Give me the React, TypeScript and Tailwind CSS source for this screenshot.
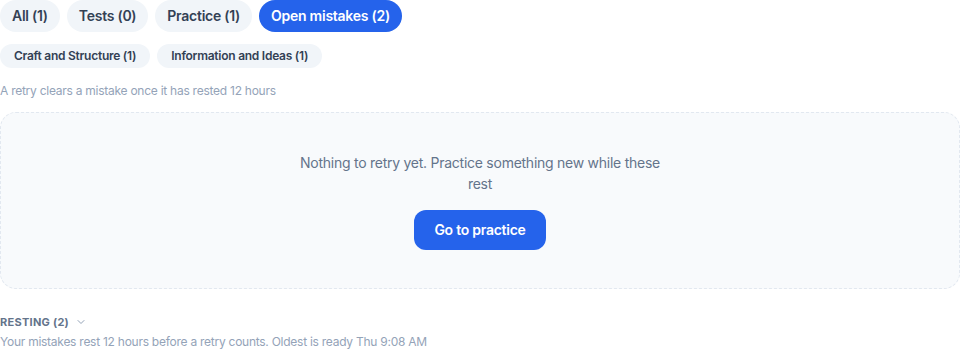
import { ChevronDown } from "lucide-react";

const tabs = [
  { label: "All (1)", active: false },
  { label: "Tests (0)", active: false },
  { label: "Practice (1)", active: false },
  { label: "Open mistakes (2)", active: true },
];

const skills = ["Craft and Structure (1)", "Information and Ideas (1)"];

export default function App() {
  return (
    <div className="bg-white w-[960px] h-[351px] overflow-hidden font-['Inter',sans-serif] tracking-[-0.016em]">
      {/* filter tabs */}
      <div className="flex items-center gap-[7px]">
        {tabs.map((t) => (
          <button
            key={t.label}
            className={
              t.active
                ? "h-8 px-3 rounded-full text-sm font-semibold bg-[#2563eb] text-white"
                : "h-8 px-3 rounded-full text-sm font-semibold bg-[#f1f5f9] text-[#334155]"
            }
          >
            {t.label}
          </button>
        ))}
      </div>

      <div className="flex items-center gap-[7px] mt-3">
        {skills.map((s) => (
          <span
            key={s}
            className="h-6 px-[14px] flex items-center rounded-full text-xs font-semibold bg-[#f1f5f9] text-[#334155]"
          >
            {s}
          </span>
        ))}
      </div>

      <p className="mt-[15px] text-xs leading-4 text-[#94a3b8]">
        A retry clears a mistake once it has rested 12 hours
      </p>

      {/* empty state */}
      <div className="mt-[13px] h-[177px] rounded-2xl border border-dashed border-[#e2e8f0] bg-[#f8fafc] flex flex-col items-center justify-center">
        <p className="max-w-sm text-center text-sm leading-[21px] text-[#64748b]">
          Nothing to retry yet. Practice something new while these rest
        </p>
        <button className="mt-4 h-10 px-5 rounded-xl bg-[#2563eb] text-white text-sm font-semibold">
          Go to practice
        </button>
      </div>

      <div className="mt-[25px] flex items-center gap-1.5 text-[11px] leading-4 font-bold tracking-wide uppercase text-[#64748b]">
        Resting (2)
        <ChevronDown className="w-3 h-3 text-[#94a3b8]" strokeWidth={2} />
      </div>
      <p className="mt-1 text-xs leading-4 text-[#94a3b8]">
        Your mistakes rest 12 hours before a retry counts. Oldest is ready Thu 9:08 AM
      </p>
    </div>
  );
}
